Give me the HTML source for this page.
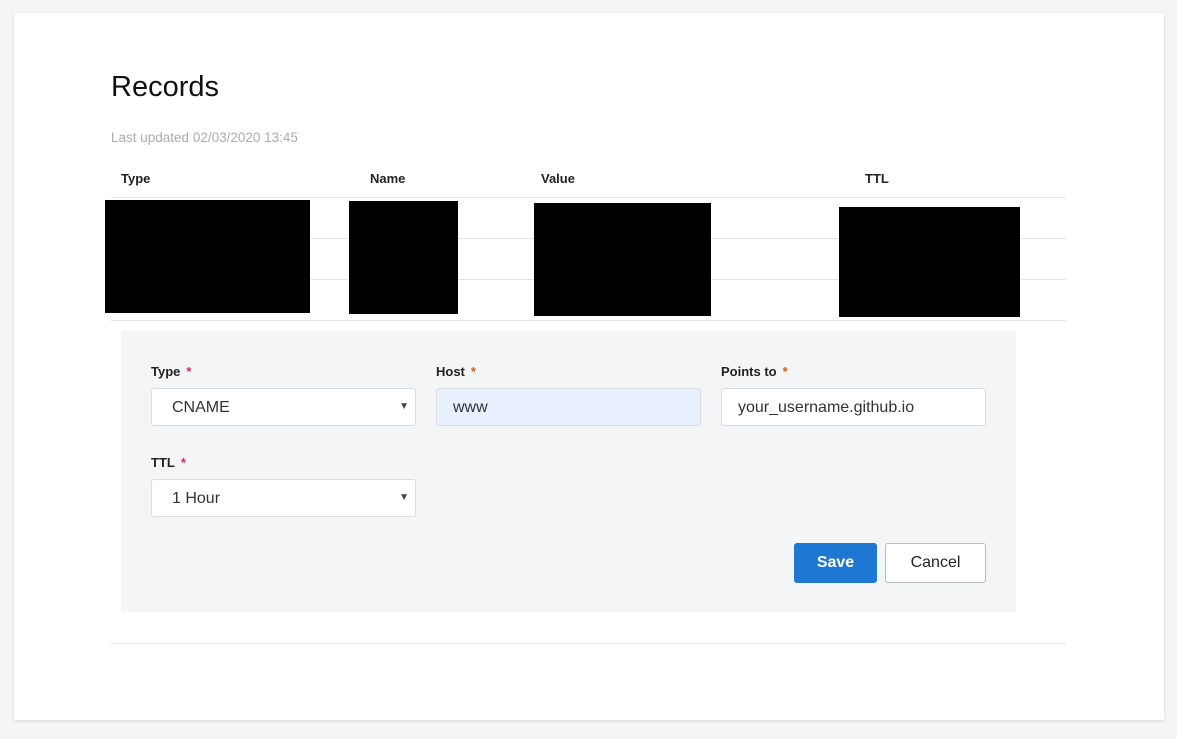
<!DOCTYPE html>
<html><head><style>
body{margin:0;width:1177px;height:739px;background:#f4f5f6;font-family:"Liberation Sans",sans-serif;position:relative;overflow:hidden}
.card{position:absolute;left:14px;top:13px;width:1150px;height:707px;background:#fff;box-shadow:0 1px 3px rgba(0,0,0,.12)}
.a{position:absolute}
h1{position:absolute;left:111px;top:71px;margin:0;font-weight:normal;font-size:29px;color:#111}
.upd{left:111px;top:130px;font-size:13.5px;color:#a9adb2}
.th{top:171px;font-size:13px;font-weight:bold;color:#222}
.line{left:111px;width:955px;height:1px;background:#e4e5e7}
.blk{background:#000}
.panel{left:121px;top:331px;width:895px;height:281px;background:#f4f5f7}
.lbl{font-size:13px;font-weight:bold;color:#222}
.lbl span{color:#e0245e;margin-left:6px}
.inp{height:38px;box-sizing:border-box;border:1px solid #dcdde0;border-radius:3px;background:#fff;font-size:16px;color:#333;line-height:38px;padding-left:20px}
.arr{position:absolute;right:6px;top:0;font-size:10px;color:#444;line-height:36px}
.btn{height:40px;box-sizing:border-box;border-radius:3px;font-size:16px;text-align:center;line-height:38px;font-weight:bold}
</style></head><body>
<div class="card"></div>
<h1>Records</h1>
<div class="a upd">Last updated 02/03/2020 13:45</div>
<div class="a th" style="left:121px">Type</div>
<div class="a th" style="left:370px">Name</div>
<div class="a th" style="left:541px">Value</div>
<div class="a th" style="left:865px">TTL</div>
<div class="a line" style="top:197px"></div>
<div class="a line" style="top:238px"></div>
<div class="a line" style="top:279px"></div>
<div class="a line" style="top:320px"></div>
<div class="a blk" style="left:105px;top:200px;width:205px;height:113px"></div>
<div class="a blk" style="left:349px;top:201px;width:109px;height:113px"></div>
<div class="a blk" style="left:534px;top:203px;width:177px;height:113px"></div>
<div class="a blk" style="left:839px;top:207px;width:181px;height:110px"></div>
<div class="a panel"></div>
<div class="a lbl" style="left:151px;top:364px">Type<span>*</span></div>
<div class="a lbl" style="left:436px;top:364px">Host<span style="color:#e05a00">*</span></div>
<div class="a lbl" style="left:721px;top:364px">Points to<span style="color:#e05a00">*</span></div>
<div class="a inp" style="left:151px;top:388px;width:265px">CNAME<span class="arr">▼</span></div>
<div class="a inp" style="left:436px;top:388px;width:265px;background:#e8f0fe;padding-left:16px">www</div>
<div class="a inp" style="left:721px;top:388px;width:265px;padding-left:16px">your_username.github.io</div>
<div class="a lbl" style="left:151px;top:455px">TTL<span>*</span></div>
<div class="a inp" style="left:151px;top:479px;width:265px">1 Hour<span class="arr">▼</span></div>
<div class="a btn" style="left:794px;top:543px;width:83px;background:#1e77d3;color:#fff;border:1px solid #1e77d3">Save</div>
<div class="a btn" style="left:885px;top:543px;width:101px;background:#fff;color:#222;border:1px solid #b9bcc2;font-weight:normal">Cancel</div>
<div class="a line" style="top:643px"></div>
</body></html>
